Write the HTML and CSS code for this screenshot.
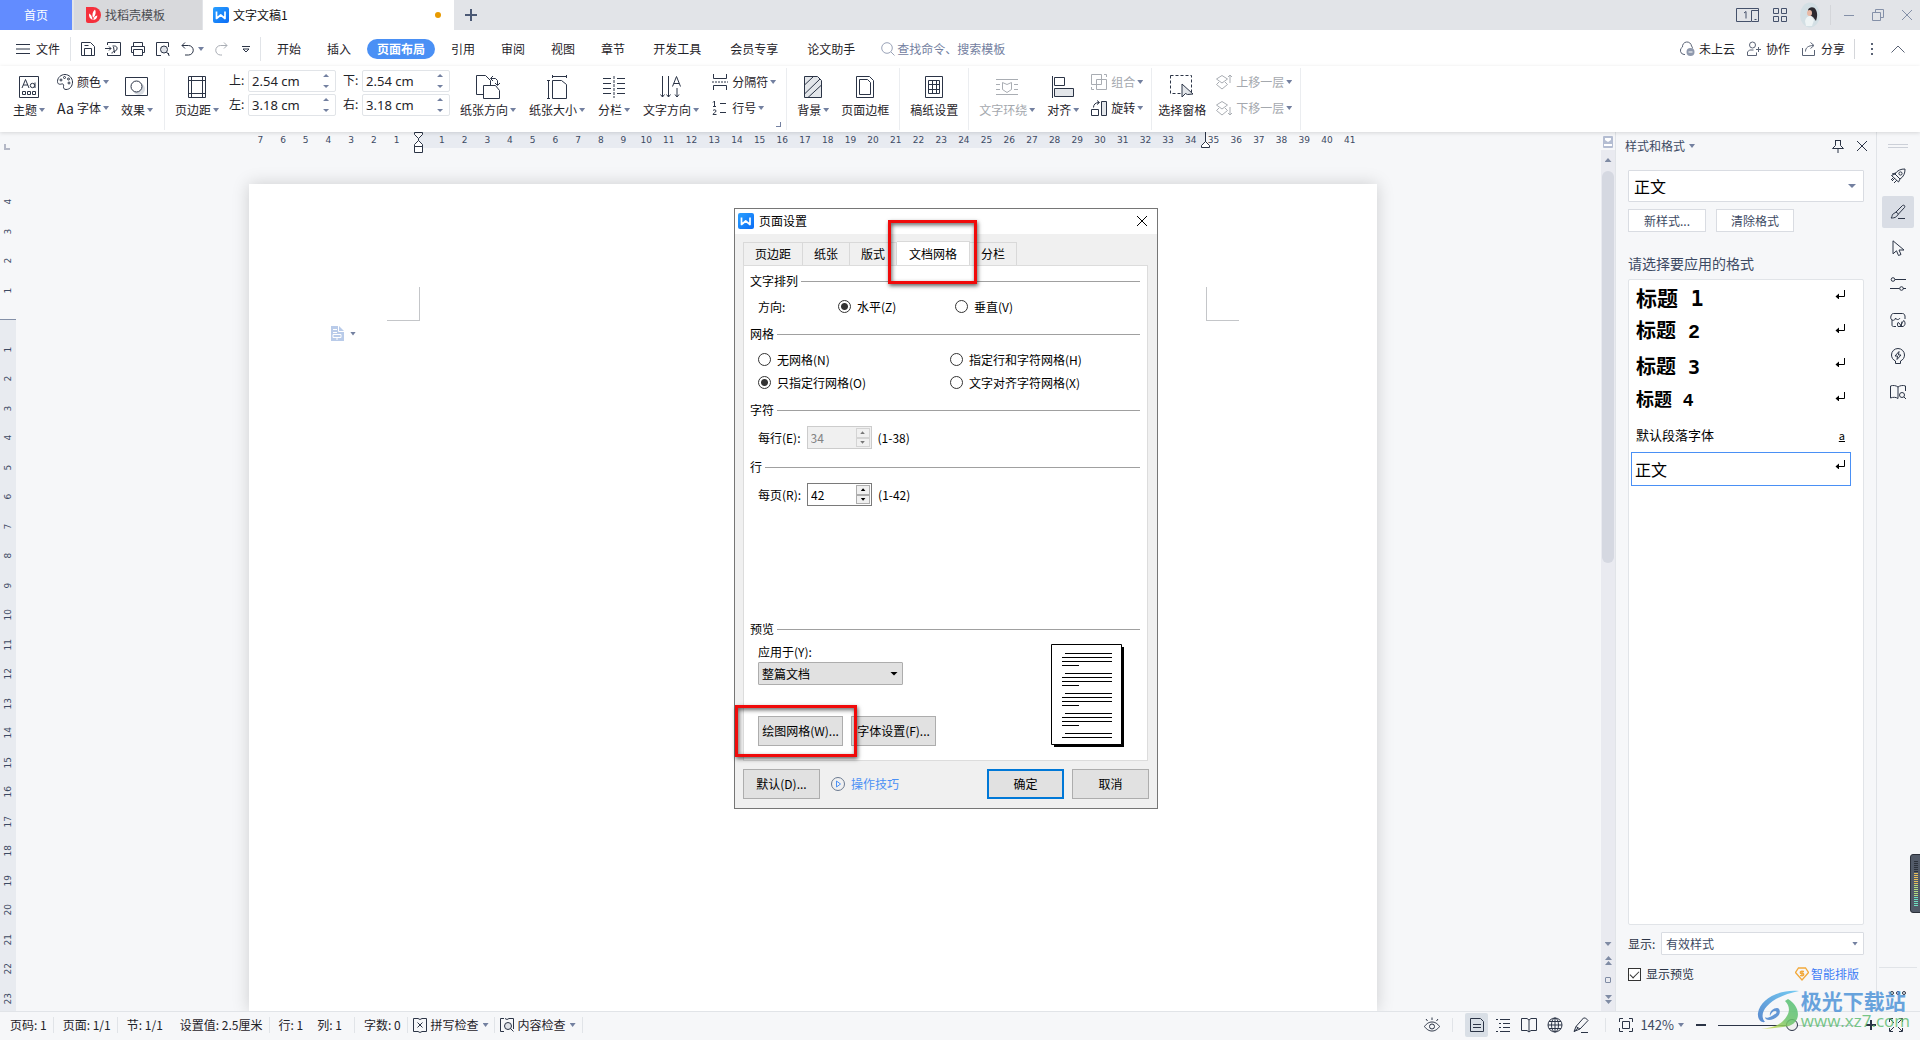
FILE: index.html
```html
<!DOCTYPE html>
<html lang="zh-CN">
<head>
<meta charset="utf-8">
<meta name="viewport" content="width=device-width, initial-scale=1">
<title>文字文稿1</title>
<link rel="stylesheet" href="styles.css">
</head>
<body>
<svg class="sprite" aria-hidden="true">
  <defs>
    <linearGradient id="wps-blue" x1="0" y1="0" x2="1" y2="1"><stop offset="0" stop-color="#2aa0ff"/><stop offset="1" stop-color="#0b6cf5"/></linearGradient>
    <linearGradient id="swirl-a" x1="0" y1="1" x2="1" y2="0"><stop offset="0" stop-color="#3f78c8"/><stop offset="1" stop-color="#5ec4f2"/></linearGradient>
    <linearGradient id="swirl-b" x1="0" y1="1" x2="1" y2="0"><stop offset="0" stop-color="#e8e04a"/><stop offset=".5" stop-color="#6cc46a"/><stop offset="1" stop-color="#4fbf7a"/></linearGradient>
  </defs>
  <symbol id="i-wps" viewBox="0 0 16 16"><rect width="16" height="16" rx="2" fill="url(#wps-blue)"/><path d="M3.500 4.500v7l4.200-3.500 4.300 3.500v-7" fill="none" stroke="#fff" stroke-width="1.700" stroke-linejoin="round"/></symbol>
  <symbol id="i-docer" viewBox="0 0 16 16"><path d="M1 0h7a8 8 0 0 1 0 16H3a2 2 0 0 1-2-2z" fill="#f5303c"/><path d="M7.600 13C4.600 11.500 3.500 9 4.200 6.500c1.800 1 3 3 3.400 6.500zM8 11C6.800 7.500 7.600 4.500 10 2.500c1.300 2.500.8 6-2 8.500zM8.300 13c.3-2.500 1.500-4 4-4.500.1 2.300-1.300 4-4 4.500z" fill="#fff"/></symbol>
  <symbol id="i-save" viewBox="0 0 16 16"><path d="M1.500 1.500h9l4 4v9h-13zM4.500 14.500v-7h7v7M4.500 4.500h4"/></symbol>
  <symbol id="i-export" viewBox="0 0 16 16"><path d="M2.500 4V1.500h13v13h-13V12M0 7.500h6M4 5.500l2 2-2 2M7 12.500c0-3 4-1 5-4.500.5-2-1-3-2.500-3H7.500M9.500 12c0-2-1-4-1-6"/></symbol>
  <symbol id="i-print" viewBox="0 0 16 16"><path d="M3.500 5.500v-4h9v4M3.500 11.500h-2v-6h13v6h-2M3.500 8.500h9v6h-9z"/></symbol>
  <symbol id="i-preview" viewBox="0 0 16 16"><path d="M6 14.500H1.500v-13h12V6M13.500 12v2.500"/><circle cx="9" cy="8.500" r="3.500" fill="#dfe2e8"/><path d="M11.500 11l3 3.500"/></symbol>
  <symbol id="i-undo" viewBox="0 0 16 16"><path d="M5 1.500l-3 3 3 3M2 4.500h6.500a4.500 4.500 0 0 1 0 9.500H5"/></symbol>
  <symbol id="i-redo" viewBox="0 0 16 16"><path d="M11 1.500l3 3-3 3M14 4.500H7.500a4.500 4.500 0 0 0 0 9.500H9"/></symbol>
  <symbol id="i-more" viewBox="0 0 8 8"><path d="M0 1.500h8M1 4l3 3 3-3z"/></symbol>
  <symbol id="i-menu" viewBox="0 0 14 12"><path d="M0 1.500h14M0 6h14M0 10.500h14"/></symbol>
  <symbol id="i-search" viewBox="0 0 14 14"><circle cx="6" cy="6" r="5.300"/><path d="M10 10l3.500 3.500"/></symbol>
  <symbol id="i-cloud" viewBox="0 0 16 16"><path d="M6 13.500H5A4 4 0 0 1 3.500 6a4.500 4.500 0 0 1 9-1c.8.8 1 1.500 1 2.500"/><circle cx="11.500" cy="11" r="4" fill="#8f99ad" stroke="none"/><path d="M9.500 11h4" stroke="#fff"/></symbol>
  <symbol id="i-team" viewBox="0 0 16 16"><circle cx="6.500" cy="4" r="3"/><path d="M1.500 14.500v-3.500l2-2h4M1.500 14.500h9v-3M12.500 6v5M10 8.500h5"/></symbol>
  <symbol id="i-share" viewBox="0 0 16 16"><path d="M1.500 7v7.500h12V9M4.500 10.500c0-4 3-6 8-6M9.500 1.500l3.500 3-3.500 3"/></symbol>
  <symbol id="i-theme" viewBox="0 0 20 22"><path d="M.5.500h19v21H.5zM3.500 15.500h3v3h-3zM8.500 15.500h3v3h-3zM13.500 15.500h3v3h-3zM3 12l3.500-8.500L10 12M4.200 9h4.600"/><circle cx="13.500" cy="9.500" r="2.200"/><path d="M16 6.500V12"/></symbol>
  <symbol id="i-palette" viewBox="0 0 16 16"><path d="M8 .5C4 .5.5 3.500.5 7.500c0 3 2.500 3 4 2.500s2.500.5 2 2.500c-.3 2 1 3 2.500 3 4 0 6.500-3.500 6.500-7.500S12 .5 8 .5z"/><circle cx="4" cy="6" r="1"/><circle cx="7.500" cy="3.500" r="1"/><circle cx="11.500" cy="5" r="1"/><circle cx="12" cy="9" r="1"/></symbol>
  <symbol id="i-effect" viewBox="0 0 24 20"><circle cx="14" cy="12" r="6" fill="#d9dde3" stroke="none"/><path d="M.5.500h22v18H.5z"/><circle cx="11.500" cy="9.500" r="5.500" fill="#fff"/></symbol>
  <symbol id="i-margin" viewBox="0 0 18 22"><path d="M.5.500h17v21H.5zM3.500.5v21M14.500.5v21M.5 4.500h17M.5 17.500h17"/></symbol>
  <symbol id="i-orient" viewBox="0 0 24 24"><path d="M7 19.500H.5V.5h9l5 5V10M7.500 23.500h16v-8l-4-5h-12zM15 3.500h4.500l2 2V10M17 1l-2.500 2.500L17 6M19 8l2.500 2.500L24 8"/></symbol>
  <symbol id="i-size" viewBox="0 0 20 24"><path d="M5.500 5.500h9l5 4v14h-14zM1.500 5.500v18M0 5.500h3M0 23.500h3M5.500 1.500h14M5.500 0v3M19.500 0v3"/></symbol>
  <symbol id="i-columns" viewBox="0 0 24 22"><path d="M1 2.500h8M1 7.500h8M1 12.500h8M1 17.500h8M15 2.500h8M15 7.500h8M15 12.500h8M15 17.500h8"/><path d="M12 0v22" stroke-dasharray="3 1"/></symbol>
  <symbol id="i-direction" viewBox="0 0 22 22"><path d="M2.500 0v21M8.500 0v21M.5 18.500l2 2.500 2-2.500M6.500 18.500l2 2.500 2-2.500M17 12v9M15 18.500l2 2.500 2-2.500M12.500 10.500l4-10 4 10M13.800 7.500h5.400"/></symbol>
  <symbol id="i-break" viewBox="0 0 16 16"><path d="M1.500 0v4.500h13V0M1.500 16v-4.500h13V16"/><path d="M0 8h16" stroke-dasharray="2 1"/></symbol>
  <symbol id="i-lineno" viewBox="0 0 16 16"><path d="M1 2.500l1.500-1.500v5M1 6.500h3M1 10.500c1-1 3-1 3 .5S1 13 1 14.500h3.500M8 3.500h6M8 12.500h6"/></symbol>
  <symbol id="i-bg" viewBox="0 0 18 22"><path d="M.5.500h13l4 4v17H.5z" fill="#e3e6ea"/><path d="M.5 9l9-8.500M.5 18L16 3M4 21.500L17.500 9"/></symbol>
  <symbol id="i-border" viewBox="0 0 18 22"><path d="M.5.500h13l4 4v17H.5zM3.500 3.500h8l3 3v12h-11z"/></symbol>
  <symbol id="i-grid" viewBox="0 0 18 22"><path d="M.5.500h17v21H.5zM3.500 4.500h11v13h-11zM3.500 8.500h11M3.500 13.500h11M7.500 4.500v4M11.500 4.500v4M7.500 8.500v5M11.500 8.500v5M7.500 13.500v4M11.500 13.500v4"/></symbol>
  <symbol id="i-wrap" viewBox="0 0 22 22"><path d="M0 3.500h22M0 8.500h4M0 13.500h4M18 8.500h4M18 13.500h4M0 18.500h22M6.500 6.500l4.500 2 4.500-2v7L11 16.500l-4.500-3z"/></symbol>
  <symbol id="i-align" viewBox="0 0 22 22"><path d="M.5 0v22M2.500 1.500h10v8h-10z"/><path d="M2.500 12.500h19v8h-19z" fill="#e3e6ea"/></symbol>
  <symbol id="i-group" viewBox="0 0 16 16"><path d="M.5.500h10v10H.5zM5.500 5.500h10v10h-10zM13 .5h2.500V3M.5 13v2.500H3"/></symbol>
  <symbol id="i-rotate" viewBox="0 0 16 16"><path d="M.5 9.500h7v6h-7z"/><path d="M10.500 1.500h5v14h-5z" fill="#e3e6ea"/><path d="M2.500 7.500c0-3 2-5 5.500-5M6 .5l2.500 2L6 4.500"/></symbol>
  <symbol id="i-select" viewBox="0 0 24 24"><path d="M.5.500h21v18H.5z" stroke-dasharray="3 2"/><path d="M12 9v13l3.500-3.500 2 1 5.500-.5z" fill="#e3e6ea"/></symbol>
  <symbol id="i-up" viewBox="0 0 16 16"><path d="M.5 5L6 1.500 11.500 5 6 9zM3 8L.5 10.500 6 15l5.500-4.500L9 8M14 9V1M12 3l2-2 2 2"/></symbol>
  <symbol id="i-down" viewBox="0 0 16 16"><path d="M.5 5L6 1.500 11.500 5 6 9zM3 8L.5 10.500 6 15l5.500-4.500L9 8M14 7v8M12 13l2 2 2-2"/></symbol>
  <symbol id="i-devices" viewBox="0 0 24 16"><path d="M15 14.500H.5v-13h22v13h-7v-11h7M8 6l2-1.500v7M18.500 12.500h2"/></symbol>
  <symbol id="i-apps" viewBox="0 0 14 14"><path d="M.5.500h5v5h-5zM8.500.5h5v5h-5zM.5 8.500h5v5h-5zM8.500 8.500h5v5h-5z"/></symbol>
  <symbol id="i-min" viewBox="0 0 12 12"><path d="M1 6.500h10"/></symbol>
  <symbol id="i-restore" viewBox="0 0 12 12"><path d="M.5 3.500h8v8h-8zM3.500 3.500v-3h8v8h-3"/></symbol>
  <symbol id="i-close" viewBox="0 0 12 12"><path d="M1 1l10 10M11 1L1 11"/></symbol>
  <symbol id="i-chevron" viewBox="0 0 14 8"><path d="M.5 7.500L7 1l6.500 6.500"/></symbol>
  <symbol id="i-dots" viewBox="0 0 2 12"><path d="M1 0v2M1 5v2M1 10v2" stroke-width="2"/></symbol>
  <symbol id="i-pin" viewBox="0 0 14 14"><path d="M4 1.500h6M4.500 1.500v5L1.500 9.500h11l-3-3v-5M7 9.500V14"/></symbol>
  <symbol id="i-return" viewBox="0 0 10 9"><path d="M9.500 0v6.500H2"/><path d="M4 3.500v6L.5 6.500z" fill="#000" stroke="none"/></symbol>
  <symbol id="i-rocket" viewBox="0 0 16 16"><path d="M5 6C7 2.500 11 .8 15 1c.2 4-1.500 8-5 10zM5 6L1.500 7.500 8.500 14 10 11M6 5L2 6M5 10l-3 3M3 10l-2 2M7 12l-3 3"/><circle cx="10.500" cy="5.500" r="1.600"/></symbol>
  <symbol id="i-brush" viewBox="0 0 16 16"><path d="M6 8l6.500-6.500c1.500-1 3 .5 2 2L8.500 10M6 8l2.500 2-2 2.500c-1.500 1.500-4 1.500-5.500 1.500 1-1 1-2 1.500-3.500zM8 14.500h7"/></symbol>
  <symbol id="i-pen" viewBox="0 0 16 16"><path d="M1 14.500L3 9.500 10.500 1h2L15 3.500 7 12zM3 9.500L7 12M1 14.500l4-3.500M8 15.500h7"/></symbol>
  <symbol id="i-cursor" viewBox="0 0 16 16"><path d="M3 .8v13l3.500-3 2 4.700 2.500-1-2-4.500H14z"/></symbol>
  <symbol id="i-sliders" viewBox="0 0 16 16"><circle cx="3" cy="3.500" r="1.800"/><path d="M5 3.500h11M0 12.500h9.500M13 12.500h3"/><circle cx="11.500" cy="12.500" r="1.800"/></symbol>
  <symbol id="i-leaf" viewBox="0 0 16 16"><path d="M6 14.500H3.500c-1 0-1.500-.5-1.500-1.500V8C.5 7 .5 5.500 1 4c.5-1.500 1-2.500 2.500-2.500h9c1.500 0 2 1 2.500 2.500v3M2 8c2 1 3.500-.5 3.500-2 1 2 3.500 2 4.500 0M8 14.500c-1-2-.5-3.500 0-4 1.500.5 2.500 2 3 4 .5-3 1.500-5 3-6 1.500 2 1.500 5-1 6zM11 14.500l1-5"/></symbol>
  <symbol id="i-bulb" viewBox="0 0 16 16"><path d="M5.500 13C3 12 1.500 9.500 1.500 7a6.500 6.500 0 0 1 13 0c0 2.500-1.500 5-4 6v2.500h-5zM9 3.500L5 8h2.500L7 11.500 11 7H8.500z"/></symbol>
  <symbol id="i-reader" viewBox="0 0 16 16"><path d="M8 14.500C6 13 3 13 .5 14V2C3 1 6 1.500 8 3c2-1.500 5-2 7.500-1v5M8 3v11.500"/><circle cx="12" cy="11" r="2.500"/><path d="M14 13l2 2"/></symbol>
  <symbol id="i-eye" viewBox="0 0 16 16"><path d="M.5 9.500C3 6 5.500 5 8 5s5 1 7.500 4.500C13 13 10.500 14 8 14S3 13 .5 9.500zM8 3V.5M3.500 4L2 2M12.500 4L14 2"/><circle cx="8" cy="9.500" r="2.500"/></symbol>
  <symbol id="i-page" viewBox="0 0 16 16"><path d="M1.500 1.500h10l3 3v10h-13zM4 7.500h8M4 10.500h8"/></symbol>
  <symbol id="i-outline" viewBox="0 0 16 16"><path d="M1 2.500h2M5 2.500h10M4 6.500h2M8 6.500h7M4 10.500h2M8 10.500h7M1 14.500h2M5 14.500h10"/></symbol>
  <symbol id="i-book" viewBox="0 0 16 16"><path d="M.5 1.500H6l2 1.500 2-1.500h5.500v12H10L8 15l-2-1.500H.5zM8 3v12"/></symbol>
  <symbol id="i-globe" viewBox="0 0 16 16"><circle cx="8" cy="8" r="7"/><ellipse cx="8" cy="8" rx="3.500" ry="7"/><path d="M1 8h14M2 4.500h12M2 11.500h12M8 1v14"/></symbol>
  <symbol id="i-fit" viewBox="0 0 16 16"><path d="M4.500 4.500h7v7h-7zM1.500 5V1.500H5M11 1.500h3.500V5M14.500 11v3.500H11M5 14.500H1.500V11"/></symbol>
  <symbol id="i-full" viewBox="0 0 16 16"><path d="M1.500 5V1.500H5M11 1.500h3.500V5M14.500 11v3.500H11M5 14.500H1.500V11M2 2l4 4M14 2l-4 4M14 14l-4-4M2 14l4-4"/></symbol>
  <symbol id="i-spell" viewBox="0 0 16 16"><path d="M6 1.500H1.500v13H6l2 1 2-1h4.500v-13H10l-2 1zM5.500 5.500l5 5M10.500 5.500l-5 5"/></symbol>
  <symbol id="i-check" viewBox="0 0 16 16"><path d="M5 1.500H1.500v13H5M8 2.500l2-1h4.500V12M8 2.500l-2-1"/><circle cx="9" cy="9" r="3.500" fill="#dfe2e8"/><path d="M11.500 11.500l3 3"/></symbol>
  <symbol id="i-smart" viewBox="0 0 14 14"><path d="M3.500 1h7L13.500 5.500 7 13 .5 5.500z" stroke="#f2a93b" stroke-width="1.300"/><path d="M9 4.500H6c-1 0-1 2 0 2h2c1 0 1 2.200 0 2.200H5M7 3.500v6" stroke="#f2a93b" stroke-width="1.300"/></symbol>
  <symbol id="i-play" viewBox="0 0 14 14"><circle cx="7" cy="7" r="6.500" stroke="#6b7a90"/><path d="M5.500 4l4 3-4 3z" stroke="#4a90f5"/></symbol>
</svg>

<div class="app">
  <header class="titlebar">
    <button class="home-tab">首页</button>
    <button class="file-tab"><svg class="ic16 plain"><use href="#i-docer"/></svg>找稻壳模板</button>
    <button class="file-tab current"><svg class="ic16 plain"><use href="#i-wps"/></svg>文字文稿1<span class="unsaved"></span></button>
    <button class="new-tab" aria-label="新建"></button>
    <div class="window-tools">
      <svg class="ic-devices"><use href="#i-devices"/></svg>
      <svg class="ic14"><use href="#i-apps"/></svg>
      <svg class="avatar plain" viewBox="0 0 20 26"><ellipse cx="10" cy="13" rx="10" ry="12.500" fill="#d3dfe4"/><path d="M8 8c1-3 6-4 8 0s1 8 0 11l-3-4-5-3z" fill="#2c2a30"/><ellipse cx="9.500" cy="11" rx="2.500" ry="3" fill="#e8b9a5"/><path d="M5 19c1-4 3-5 6-5l3 4-2 6H6z" fill="#eef4f5"/></svg>
      <span class="vline"></span>
      <button aria-label="最小化"><svg class="ic12"><use href="#i-min"/></svg></button>
      <button aria-label="还原"><svg class="ic12"><use href="#i-restore"/></svg></button>
      <button aria-label="关闭"><svg class="ic12"><use href="#i-close"/></svg></button>
    </div>
  </header>

  <nav class="menubar">
    <button class="file-menu"><svg class="ic-menu"><use href="#i-menu"/></svg>文件</button>
    <div class="quick">
      <svg class="ic16"><use href="#i-save"/></svg>
      <svg class="ic16"><use href="#i-export"/></svg>
      <svg class="ic16"><use href="#i-print"/></svg>
      <svg class="ic16"><use href="#i-preview"/></svg>
      <span class="with-caret"><svg class="ic16"><use href="#i-undo"/></svg><i class="caret"></i></span>
      <svg class="ic16 faded"><use href="#i-redo"/></svg>
      <svg class="ic8"><use href="#i-more"/></svg>
    </div>
    <div class="tabs">
      <button>开始</button><button>插入</button><button class="current">页面布局</button><button>引用</button><button>审阅</button><button>视图</button><button>章节</button>
    </div>
    <div class="tabs more">
      <button>开发工具</button><button>会员专享</button><button>论文助手</button>
    </div>
    <label class="search"><svg class="ic14"><use href="#i-search"/></svg><input type="text" placeholder="查找命令、搜索模板" aria-label="查找命令、搜索模板"></label>
    <div class="account">
      <button><svg class="ic16"><use href="#i-cloud"/></svg>未上云</button>
      <button><svg class="ic16"><use href="#i-team"/></svg>协作</button>
      <button><svg class="ic16"><use href="#i-share"/></svg>分享</button>
      <span class="vline"></span>
      <svg class="ic-dots"><use href="#i-dots"/></svg>
      <svg class="ic-chevron"><use href="#i-chevron"/></svg>
    </div>
  </nav>

  <section class="ribbon">
    <div class="group snug">
      <button class="big"><svg width="20" height="22"><use href="#i-theme"/></svg><span>主题<i class="caret"></i></span></button>
      <div class="stack">
        <button class="small"><svg class="ic16"><use href="#i-palette"/></svg>颜色<i class="caret"></i></button>
        <button class="small"><b class="aa">Aa</b>字体<i class="caret"></i></button>
      </div>
      <button class="big"><svg width="24" height="20"><use href="#i-effect"/></svg><span>效果<i class="caret"></i></span></button>
    </div>
    <div class="group wide">
      <button class="big"><svg width="18" height="22"><use href="#i-margin"/></svg><span>页边距<i class="caret"></i></span></button>
      <div class="margins">
        <label for="m-top">上:</label><span class="spin"><input id="m-top" type="text" value="2.54 cm"><span class="arrows"></span></span>
        <label for="m-bottom">下:</label><span class="spin"><input id="m-bottom" type="text" value="2.54 cm"><span class="arrows"></span></span>
        <label for="m-left">左:</label><span class="spin"><input id="m-left" type="text" value="3.18 cm"><span class="arrows"></span></span>
        <label for="m-right">右:</label><span class="spin"><input id="m-right" type="text" value="3.18 cm"><span class="arrows"></span></span>
      </div>
      <button class="big"><svg width="24" height="24"><use href="#i-orient"/></svg><span>纸张方向<i class="caret"></i></span></button>
      <button class="big"><svg width="20" height="24"><use href="#i-size"/></svg><span>纸张大小<i class="caret"></i></span></button>
      <button class="big"><svg width="24" height="22"><use href="#i-columns"/></svg><span>分栏<i class="caret"></i></span></button>
      <button class="big"><svg width="22" height="22"><use href="#i-direction"/></svg><span>文字方向<i class="caret"></i></span></button>
      <div class="stack">
        <button class="small"><svg class="ic16"><use href="#i-break"/></svg>分隔符<i class="caret"></i></button>
        <button class="small"><svg class="ic16"><use href="#i-lineno"/></svg>行号<i class="caret"></i></button>
      </div>
      <i class="launcher"></i>
    </div>
    <div class="group">
      <button class="big"><svg width="18" height="22"><use href="#i-bg"/></svg><span>背景<i class="caret"></i></span></button>
      <button class="big"><svg width="18" height="22"><use href="#i-border"/></svg><span>页面边框</span></button>
    </div>
    <div class="group">
      <button class="big"><svg width="18" height="22"><use href="#i-grid"/></svg><span>稿纸设置</span></button>
    </div>
    <div class="group tight-end">
      <button class="big off"><svg width="22" height="22"><use href="#i-wrap"/></svg><span>文字环绕<i class="caret"></i></span></button>
      <button class="big"><svg width="22" height="22"><use href="#i-align"/></svg><span>对齐<i class="caret"></i></span></button>
      <div class="stack">
        <button class="small off"><svg class="ic16"><use href="#i-group"/></svg>组合<i class="caret"></i></button>
        <button class="small"><svg class="ic16"><use href="#i-rotate"/></svg>旋转<i class="caret"></i></button>
      </div>
    </div>
    <div class="group tight-start">
      <button class="big"><svg width="24" height="24"><use href="#i-select"/></svg><span>选择窗格</span></button>
      <div class="stack">
        <button class="small off"><svg class="ic16"><use href="#i-up"/></svg>上移一层<i class="caret"></i></button>
        <button class="small off"><svg class="ic16"><use href="#i-down"/></svg>下移一层<i class="caret"></i></button>
      </div>
    </div>
  </section>

  <main class="workspace">
    <div class="ruler-v">
      <i class="tabstop"></i>
      <div class="ticks"><span>4</span><span>3</span><span>2</span><span>1</span><span class="zero"></span><span>1</span><span>2</span><span>3</span><span>4</span><span>5</span><span>6</span><span>7</span><span>8</span><span>9</span><span>10</span><span>11</span><span>12</span><span>13</span><span>14</span><span>15</span><span>16</span><span>17</span><span>18</span><span>19</span><span>20</span><span>21</span><span>22</span><span>23</span></div>
    </div>
    <div class="canvas">
      <div class="ruler-h"><span>7</span><span>6</span><span>5</span><span>4</span><span>3</span><span>2</span><span>1</span><span class="marker"><svg width="10" height="22" viewBox="0 0 10 22"><path d="M.5.500h8v2l-4 4-4-4zM4.500 6.500v2l4 4v2h-8v-2l4-4M.5 14.500h8v6h-8z"/></svg></span><span>1</span><span>2</span><span>3</span><span>4</span><span>5</span><span>6</span><span>7</span><span>8</span><span>9</span><span>10</span><span>11</span><span>12</span><span>13</span><span>14</span><span>15</span><span>16</span><span>17</span><span>18</span><span>19</span><span>20</span><span>21</span><span>22</span><span>23</span><span>24</span><span>25</span><span>26</span><span>27</span><span>28</span><span>29</span><span>30</span><span>31</span><span>32</span><span>33</span><span>34</span><span class="indent"><svg width="10" height="16" viewBox="0 0 10 16"><path d="M4.500 0v10M.5 15.500v-2l4-4 4 4v2z"/></svg>35</span><span>36</span><span>37</span><span>38</span><span>39</span><span>40</span><span>41</span></div>
      <article class="page">
        <div class="corners"><i class="corner left"></i><i class="corner right"></i></div>
        <div class="para-tool"><svg class="plain" width="13" height="15" viewBox="0 0 13 15"><path d="M0 0h8l5 5v10H0z" fill="#b9cbe9"/><path d="M7.500 0v5.500H13M2 3.500h4M2 6.500h4M2 8.500h8v3H2zM6 11v3" fill="none" stroke="#fff"/></svg><i class="caret"></i></div>
      </article>
    </div>
    <div class="scroll">
      <svg class="plain" width="10" height="12" viewBox="0 0 10 12"><rect width="10" height="12" rx="1" fill="#b4bdd2"/><path d="M2 2h6v2L5 6 2 4zM1 8h8v2H1z" fill="#fff"/></svg>
      <div class="track"><i class="up"></i><i class="thumb"></i><i class="down"></i>
        <svg class="plain" width="7" height="9" viewBox="0 0 7 9"><path d="M3.500 0L7 4H0zM3.500 5L7 9H0z" fill="#7f8ba4"/></svg>
        <i class="square"></i>
        <svg class="plain" width="7" height="9" viewBox="0 0 7 9"><path d="M0 0h7L3.500 4zM0 5h7L3.500 9z" fill="#7f8ba4"/></svg>
      </div>
    </div>

    <aside class="styles">
      <header><h2>样式和格式<i class="caret"></i></h2><svg class="ic14"><use href="#i-pin"/></svg><svg class="ic12"><use href="#i-close"/></svg></header>
      <span class="pick current-style"><select aria-label="当前样式"><option>正文</option></select></span>
      <div class="style-actions"><button>新样式...</button><button>清除格式</button></div>
      <h3>请选择要应用的格式</h3>
      <ul class="style-list">
        <li class="h1">标题 1<svg class="mark"><use href="#i-return"/></svg></li>
        <li class="h2">标题 2<svg class="mark"><use href="#i-return"/></svg></li>
        <li class="h3">标题 3<svg class="mark"><use href="#i-return"/></svg></li>
        <li class="h4">标题 4<svg class="mark"><use href="#i-return"/></svg></li>
        <li class="char">默认段落字体<u>a</u></li>
        <li class="body selected">正文<svg class="mark"><use href="#i-return"/></svg></li>
      </ul>
      <div class="show"><label for="show">显示:</label><span class="pick"><select id="show"><option>有效样式</option></select></span></div>
      <div class="foot"><label><input type="checkbox" checked>显示预览</label><a href="#"><svg class="ic14"><use href="#i-smart"/></svg>智能排版</a></div>
    </aside>

    <div class="rail">
      <i class="grip"></i>
      <button aria-label="快捷"><svg class="ic16"><use href="#i-rocket"/></svg></button>
      <button class="current" aria-label="样式"><svg class="ic16"><use href="#i-brush"/></svg></button>
      <button aria-label="选择"><svg class="ic16"><use href="#i-cursor"/></svg></button>
      <button aria-label="属性"><svg class="ic16"><use href="#i-sliders"/></svg></button>
      <button aria-label="素材"><svg class="ic16"><use href="#i-leaf"/></svg></button>
      <button aria-label="推荐"><svg class="ic16"><use href="#i-bulb"/></svg></button>
      <button aria-label="查阅"><svg class="ic16"><use href="#i-reader"/></svg></button>
      <div class="rail-more"><svg width="16" height="6" viewBox="0 0 16 6"><circle cx="2" cy="3" r="1.500"/><circle cx="8" cy="3" r="1.500"/><circle cx="14" cy="3" r="1.500"/></svg></div>
    </div>
  </main>

  <footer class="status">
    <span>页码: 1</span><span class="line">页面: 1/1</span><span class="line">节: 1/1</span><span class="far">设置值: 2.5厘米</span><span class="line">行: 1</span><span class="column">列: 1</span><span class="line">字数: 0</span>
    <button class="line"><svg class="ic16"><use href="#i-spell"/></svg>拼写检查<i class="caret"></i></button>
    <button class="line last"><svg class="ic16"><use href="#i-check"/></svg>内容检查<i class="caret"></i></button>
    <div class="views">
      <svg class="ic16"><use href="#i-eye"/></svg>
      <i class="vline"></i>
      <div class="modes">
        <button class="current" aria-label="页面视图"><svg class="ic16"><use href="#i-page"/></svg></button>
        <button aria-label="大纲"><svg class="ic16"><use href="#i-outline"/></svg></button>
        <button aria-label="阅读版式"><svg class="ic16"><use href="#i-book"/></svg></button>
        <button aria-label="Web版式"><svg class="ic16"><use href="#i-globe"/></svg></button>
        <button aria-label="写作模式"><svg class="ic16"><use href="#i-pen"/></svg></button>
      </div>
      <i class="vline"></i>
      <svg class="ic16"><use href="#i-fit"/></svg>
      <span class="zoom">142%<i class="caret"></i></span>
      <button class="minus" aria-label="缩小"></button>
      <input type="range" min="0" max="100" value="54" aria-label="显示比例">
      <button class="plus" aria-label="放大"></button>
      <svg class="ic16"><use href="#i-full"/></svg>
    </div>
  </footer>

  <div class="dialog" role="dialog" aria-label="页面设置">
    <header><svg class="ic16 plain"><use href="#i-wps"/></svg><span>页面设置</span><button aria-label="关闭"><svg class="ic12"><use href="#i-close"/></svg></button></header>
    <div class="dialog-tabs"><button>页边距</button><button>纸张</button><button>版式</button><button class="current">文档网格</button><button>分栏</button></div>
    <div class="panel">
      <fieldset><legend>文字排列</legend>
        <div class="row direction"><span>方向:</span><label><input type="radio" name="dir" checked>水平(Z)</label><label><input type="radio" name="dir">垂直(V)</label></div>
      </fieldset>
      <fieldset><legend>网格</legend>
        <div class="row pair"><label><input type="radio" name="grid">无网格(N)</label><label><input type="radio" name="grid">指定行和字符网格(H)</label></div>
        <div class="row pair"><label><input type="radio" name="grid" checked>只指定行网格(O)</label><label><input type="radio" name="grid">文字对齐字符网格(X)</label></div>
      </fieldset>
      <fieldset class="number"><legend>字符</legend>
        <div class="row"><label for="per-line">每行(E):</label><span class="stepper off"><input id="per-line" type="text" value="34" disabled><span class="steps"><i></i><i></i></span></span><span>(1-38)</span></div>
      </fieldset>
      <fieldset class="number"><legend>行</legend>
        <div class="row"><label for="per-page">每页(R):</label><span class="stepper"><input id="per-page" type="text" value="42"><span class="steps"><i></i><i></i></span></span><span>(1-42)</span></div>
      </fieldset>
      <fieldset class="preview"><legend>预览</legend>
        <div class="preview-body">
          <div class="apply"><label for="apply">应用于(Y):</label><span class="pick"><select id="apply"><option>整篇文档</option></select></span>
            <div class="apply-buttons"><button>绘图网格(W)...</button><button>字体设置(F)...</button></div></div>
          <svg class="sheet plain" width="73" height="103" viewBox="0 0 73 103"><path d="M3 3h70v100H3z" fill="#000"/><path d="M.5.500h70v100H.5z" fill="#fff" stroke="#000"/><path d="M14 9.500h47M11 13.500h50M11 17.500h50M11 21.500h17M14 29.500h47M11 33.500h50M11 37.500h50M11 41.500h17M14 49.500h47M11 53.500h50M11 57.500h50M11 61.500h17M14 69.500h47M11 73.500h50M11 77.500h50M11 81.500h17M14 89.500h47M11 93.500h50" stroke="#000"/></svg>
        </div>
      </fieldset>
    </div>
    <div class="dialog-foot"><button>默认(D)...</button><a href="#"><svg class="ic14"><use href="#i-play"/></svg>操作技巧</a><button class="primary">确定</button><button>取消</button></div>
    <i class="callout tab-callout"></i>
    <i class="callout button-callout"></i>
  </div>

  <svg class="meter plain" viewBox="0 0 10 59"><path d="M14 .5H3a2.500 2.500 0 0 0-2.500 2.500v53A2.500 2.500 0 0 0 3 58.500h11z" fill="#525a68" stroke="#2b303a"/><path d="M6 7v12" stroke="#2b303a" stroke-width="4" stroke-dasharray="1 1"/><path d="M6 19v12" stroke="#e8c05a" stroke-width="4" stroke-dasharray="1 1"/><path d="M6 31v12" stroke="#b4dc80" stroke-width="4" stroke-dasharray="1 1"/><path d="M6 43v10" stroke="#6fe0c0" stroke-width="4" stroke-dasharray="1 1"/></svg>

  <div class="watermark">
    <svg class="plain" width="44" height="41" viewBox="0 0 44 41"><path d="M42 2C22 0 3 10 1 24c-.8 6 3 10 7 9C0 24 12 8 42 2z" fill="url(#swirl-a)"/><path d="M8 28c0 4 8 4 13-1 3-3 2-8-1-8-4 0-8 4-7 8 1-3 3-5 5-5s2 2 0 3c-4 3-9 5-10 3z" fill="#4a86cf"/><path d="M31 10c14 8 14 27-5 28C17 39 9 40 4 40c8-1 17-3 22-8 7-7 8-14 2-20z" fill="url(#swirl-b)"/></svg>
    <div><strong>极光下载站</strong><span>www.xz7.com</span></div>
  </div>
</div>
</body>
</html>
```
FILE: styles.css
```css
* { box-sizing: border-box; }

:root {
  --ink: #2b3446;
  --muted: #7380a0;
  --line: #e1e4e8;
  --surface: #f6f7f9;
  --blue: #4a90f5;
}

body {
  margin: 0;
  font: 12px/16px "Noto Sans CJK SC", sans-serif;
  color: #1f2329;
}

button, input, select { font: inherit; color: inherit; margin: 0; }
button { border: 0; padding: 0; background: none; white-space: nowrap; }
a { text-decoration: none; color: var(--blue); }
h2, h3, ul, fieldset { margin: 0; padding: 0; font-weight: normal; }

svg { flex: none; display: block; fill: none; stroke: var(--ink); overflow: visible; }
svg.plain { stroke: none; }
.sprite { width: 0; height: 0; position: absolute; overflow: hidden; }
.ic8 { width: 8px; height: 8px; }
.ic12 { width: 12px; height: 12px; }
.ic14 { width: 14px; height: 14px; }
.ic16 { width: 16px; height: 16px; }

.caret {
  flex: none;
  width: 6px;
  height: 4px;
  margin-left: 2px;
  background: var(--muted);
  clip-path: polygon(0 0, 100% 0, 50% 100%);
}
.vline { flex: none; width: 1px; background: #d4d6da; }

.app { height: 100vh; display: flex; flex-direction: column; overflow: hidden; position: relative; background: #fff; }

/* title bar */
.titlebar { flex: none; height: 30px; display: flex; background: #e2e4e8; }
.home-tab { width: 72px; background: #628cff; color: #fff; }
.file-tab { width: 128px; margin-left: 2px; padding-left: 11px; display: flex; align-items: center; gap: 4px; background: #d8d9dc; color: #4b4d52; }
.file-tab.current { width: 251px; margin-left: 1px; padding: 0 13px 0 10px; background: #fff; color: #111; }
.unsaved { width: 6px; height: 6px; margin-left: auto; border-radius: 50%; background: #e89a00; }
.new-tab { width: 34px; background: linear-gradient(#4b5975, #4b5975) center / 12px 2px no-repeat, linear-gradient(#4b5975, #4b5975) center / 2px 12px no-repeat; }
.window-tools { margin-left: auto; padding-right: 5px; display: flex; align-items: center; gap: 13px; }
.window-tools svg { stroke: #45516b; }
.window-tools button svg { stroke: #8490a8; }
.window-tools button { padding: 0 2px; }
.window-tools .avatar { width: 20px; height: 26px; stroke: none; }
.window-tools .vline { height: 20px; margin: 0 -3px; }
.ic-devices { width: 24px; height: 16px; }

/* menu bar */
.menubar { flex: none; height: 36px; padding: 2px 15px 0 16px; display: flex; align-items: center; }
.file-menu { display: flex; align-items: center; gap: 6px; }
.ic-menu { width: 14px; height: 12px; }
.quick { margin-left: 10px; padding: 4px 10px 4px 9px; border: solid var(--line); border-width: 0 1px; display: flex; align-items: center; gap: 9px; }
.quick .with-caret { display: flex; align-items: center; }
.quick .ic8 { margin: 0 0 0 4px; }
.faded { opacity: .4; }
.tabs { margin-left: 6px; display: flex; gap: 6px; }
.tabs button { height: 20px; padding: 0 10px; border-radius: 10px; }
.tabs .current { background: var(--blue); color: #fff; font-weight: bold; }
.tabs.more { margin-left: 8px; gap: 9px; }
.search { margin-left: 16px; display: flex; align-items: center; gap: 2px; }
.search svg { stroke: #9aa3b8; }
.search input { width: 140px; border: 0; padding: 0; background: none; }
.search input::placeholder { color: var(--muted); opacity: 1; }
.account { margin-left: auto; display: flex; align-items: center; gap: 11px; }
.account button { display: flex; align-items: center; gap: 4px; }
.account svg { stroke: #5a6375; }
.account .vline { height: 20px; margin-left: -2px; }
.ic-dots { width: 2px; height: 12px; margin: 0 7px 0 5px; }
.ic-chevron { width: 14px; height: 8px; }

/* ribbon */
.ribbon { flex: none; height: 66px; padding-left: 2px; display: flex; background: #fff; box-shadow: 0 1px 4px #0002; z-index: 1; position: relative; }
.group { margin: 2px 0; padding: 0 10px; display: flex; gap: 12px; border-right: 1px solid #ebedf0; position: relative; }
.group.snug { padding: 0 11px; }
.group.wide { gap: 13px; }
.group.tight-end { padding-right: 8px; }
.group.tight-start { padding-left: 6px; padding-right: 8px; gap: 10px; }
.big { display: flex; flex-direction: column; align-items: center; justify-content: space-between; padding: 4px 0 12px; }
.big span, .small { display: flex; align-items: center; height: 16px; }
.big svg { margin: auto 0; }
.stack { display: flex; flex-direction: column; gap: 10px; padding-top: 6px; }
.small svg, .aa { width: 16px; margin-right: 4px; }
.aa { font-weight: normal; font-size: 14px; }
.off { color: #a4a8ae; }
.off svg { stroke: #a9adb3; }
.launcher { position: absolute; right: 5px; bottom: 3px; width: 5px; height: 5px; border: solid #7380a0; border-width: 0 1px 1px 0; }
.margins { margin: 0 -3px; padding-top: 2px; display: grid; grid-template-columns: 19px 95px 19px 88px; grid-template-rows: 22px 22px; row-gap: 2px; }
.margins label { line-height: 20px; }
.spin { width: 88px; border: 1px solid var(--line); border-radius: 2px; display: flex; align-items: center; background: #fff; }
.spin input { width: 70px; height: 20px; border: 0; padding: 0 0 0 3px; background: none; font: 13px/20px "Noto Sans", sans-serif; }
.arrows { width: 6px; height: 14px; margin-left: 4px; display: flex; flex-direction: column; justify-content: space-between; }
.arrows::before, .arrows::after { content: ""; height: 3px; background: var(--muted); clip-path: polygon(50% 0, 100% 100%, 0 100%); }
.arrows::after { clip-path: polygon(0 0, 100% 0, 50% 100%); }

/* workspace */
.workspace { flex: 1; min-height: 0; display: flex; background: var(--surface); }
.ruler-v { flex: none; width: 16px; display: flex; flex-direction: column; overflow: hidden; color: #3d4a63; }
.tabstop { flex: none; width: 6px; height: 6px; margin: 12px 0 37px 4px; border: solid #b4b8c6; border-width: 0 0 2px 2px; }
.ticks { flex: none; height: 826px; display: grid; grid-auto-rows: 1fr; background: linear-gradient(transparent 132px, #8490a8 132px, #8490a8 133px, #e8ebf0 133px); }
.ticks span { writing-mode: vertical-rl; transform: rotate(180deg); text-align: center; font: 9px/16px "DejaVu Sans", sans-serif; }
.canvas { flex: 1; min-width: 0; padding-left: 9px; display: flex; flex-direction: column; align-items: center; overflow: hidden; }
.ruler-h { flex: none; width: 1128px; height: 16px; padding-right: 16px; display: grid; grid-auto-flow: column; grid-auto-columns: minmax(0, 1fr); background: linear-gradient(90deg, transparent 170px, #e8ebf1 170px, #e8ebf1 956px, transparent 956px); color: #3d4a63; font: 9px/16px "DejaVu Sans", sans-serif; text-align: center; }
.ruler-h svg { fill: #fff; }
.marker svg { margin: 0 auto; }
.indent { position: relative; }
.indent svg { position: absolute; left: -1px; top: 0; }
.page { flex: 1; width: 1128px; margin-top: 36px; padding: 103px 138px 0; background: #fff; box-shadow: 0 0 16px #0000002b; }
.corners { display: flex; justify-content: space-between; }
.corner { width: 33px; height: 34px; border: 0 solid #c4c6c9; border-bottom-width: 1px; }
.corner.left { border-right-width: 1px; }
.corner.right { border-left-width: 1px; }
.para-tool { margin: 5px 0 0 -56px; display: flex; align-items: center; gap: 4px; }

.scroll { flex: none; width: 15px; display: flex; flex-direction: column; align-items: center; padding-top: 4px; border-right: 1px solid var(--line); }
.track { flex: 1; min-height: 0; width: 100%; margin-top: 2px; padding: 8px 1px 7px; display: flex; flex-direction: column; align-items: center; background: #e9eaf0; }
.track svg, .track i { flex: none; }
.up, .down { width: 7px; height: 4px; background: #7f8ba4; }
.up { clip-path: polygon(50% 0, 100% 100%, 0 100%); }
.down { clip-path: polygon(0 0, 100% 0, 50% 100%); margin: auto 0 10px; }
.thumb { width: 12px; height: 392px; margin-top: 9px; border-radius: 6px; background: #d5d8e1; }
.square { width: 6px; height: 6px; margin: 12px 0; border: 1px solid #7f8ba4; border-radius: 1px; }

/* styles panel */
.styles { flex: none; width: 261px; padding: 6px 12px 29px; display: flex; flex-direction: column; border-right: 1px solid var(--line); color: #3d4a63; }
.styles header { height: 16px; display: flex; align-items: center; gap: 11px; margin: 0 -4px 0 -3px; }
.styles h2 { flex: 1; display: flex; align-items: center; font-size: 12px; }
.styles h2 .caret { margin-left: 4px; }
.pick { display: grid; align-items: center; }
.pick select { grid-area: 1 / 1; width: 100%; height: 23px; padding: 0 4px; appearance: none; border: 1px solid #d9dce2; border-radius: 1px; background: #fff; }
.pick::after { content: ""; grid-area: 1 / 1; justify-self: end; width: 6px; height: 4px; margin-right: 6px; background: var(--muted); clip-path: polygon(0 0, 100% 0, 50% 100%); pointer-events: none; }
.current-style { margin-top: 16px; }
.current-style select { height: 32px; padding: 0 5px; font-size: 16px; color: #000; }
.current-style::after { width: 8px; margin-right: 8px; }
.style-actions { margin-top: 7px; display: flex; gap: 10px; }
.style-actions button { width: 78px; height: 23px; border: 1px solid #d9dce2; background: #fff; }
.styles h3 { margin-top: 21px; font-size: 14px; line-height: 20px; }
.style-list { flex: 1; min-height: 0; margin-top: 6px; padding: 2px 12px 0 2px; list-style: none; border: 1px solid var(--line); border-radius: 2px; background: #fff; color: #000; }
.style-list li { height: 34px; padding: 0 6px 0 5px; display: flex; align-items: center; justify-content: space-between; white-space: pre; font-weight: bold; }
.style-list .h1 { font-size: 21px; font-family: "DejaVu Sans Mono", "Noto Sans CJK SC", monospace; }
.style-list .h2 { font-size: 20px; font-family: "Liberation Mono", "Noto Sans CJK SC", monospace; }
.style-list .h3 { font-size: 20px; font-family: "DejaVu Sans Mono", "Noto Sans CJK SC", monospace; }
.style-list .h4 { font-size: 18px; font-family: "Liberation Mono", "Noto Sans CJK SC", monospace; }
.style-list .char { font-size: 13px; font-weight: normal; }
.style-list .char u { font-size: 11px; }
.style-list .body { font-size: 16px; font-weight: normal; }
.style-list .selected { border: 1px solid var(--blue); padding: 0 5px 0 3px; }
.mark { width: 10px; height: 9px; margin-bottom: 9px; stroke: #000; }
.show { margin-top: 7px; display: flex; align-items: center; }
.show label { width: 33px; color: var(--ink); }
.show .pick { flex: 1; }
.foot { margin-top: 11px; padding-right: 5px; display: flex; justify-content: space-between; }
.foot label, .foot a { display: flex; align-items: center; gap: 5px; color: var(--ink); }
.foot a { gap: 2px; color: #3f7df5; }
.foot input { appearance: none; width: 13px; height: 13px; border: 1px solid #333; background: #fff; display: grid; place-items: center; }
.foot input::before { content: ""; width: 8px; height: 4px; margin-bottom: 2px; border: solid #333; border-width: 0 0 1px 1px; transform: rotate(-45deg); }

.rail { flex: none; width: 43px; padding: 12px 2px 15px 0; display: flex; flex-direction: column; align-items: center; gap: 4px; }
.rail button { width: 32px; height: 32px; display: grid; place-items: center; border-radius: 2px; }
.rail .current { background: #d9dde5; }
.grip { width: 20px; height: 4px; margin-bottom: 8px; border: solid #ccd0d8; border-width: 1px 0; }
.rail-more { margin-top: auto; width: 38px; padding-top: 22px; border-top: 1px solid var(--line); display: grid; justify-items: center; }

/* status bar */
.status { flex: none; height: 29px; padding: 0 16px 2px 10px; display: flex; align-items: center; background: var(--surface); border-top: 1px solid var(--line); }
.status > span, .status > button { margin-right: 6px; display: flex; align-items: center; white-space: pre; }
.status > .line { padding-left: 9px; border-left: 1px solid var(--line); }
.status > .far { margin-left: 11px; }
.status > .column { margin: 0 12px 0 8px; }
.status > button.line { margin-right: 5px; padding-left: 4px; gap: 3px; }
.status > button .caret { margin-left: 1px; }
.status > .last { padding-right: 6px; border-right: 1px solid var(--line); }
.views { margin-left: auto; display: flex; align-items: center; }
.status .vline { height: 14px; margin: 0 12px; background: var(--line); }
.modes { display: flex; gap: 3px; margin-right: 1px; }
.modes button { width: 23px; height: 24px; display: grid; place-items: center; }
.modes .current { background: #d9dfe6; border-radius: 2px; }
.zoom { display: flex; align-items: center; margin: 0 12px 0 6px; font: 13px/16px "Noto Sans CJK SC", sans-serif; color: #3d4a63; }
.zoom .caret { margin-left: 4px; }
.minus, .plus { width: 10px; height: 10px; background: linear-gradient(var(--ink), var(--ink)) center / 10px 2px no-repeat; }
.plus { background: linear-gradient(var(--ink), var(--ink)) center / 10px 2px no-repeat, linear-gradient(var(--ink), var(--ink)) center / 2px 10px no-repeat; margin-right: 12px; }
.status input { appearance: none; width: 138px; height: 14px; margin: 0 10px 0 12px; background: linear-gradient(90deg, var(--ink) 54%, #c9ced8 54%) center / 100% 1px no-repeat; }
.status input::-webkit-slider-thumb { appearance: none; width: 12px; height: 12px; border: 1px solid var(--ink); border-radius: 50%; background: #f0f0f0; }

/* page setup dialog */
.dialog { position: absolute; left: 734px; top: 208px; z-index: 2; width: 424px; height: 601px; border: 1px solid #767676; display: flex; flex-direction: column; background: #f0f0f0; color: #000; }
.dialog > header { height: 25px; padding: 0 9px 2px 3px; display: flex; align-items: center; gap: 5px; background: #fff; }
.dialog > header span { flex: 1; }
.dialog > header svg { stroke: #000; }
.dialog > header .plain { stroke: none; }
.dialog-tabs { height: 24px; margin: 8px 8px -1px; display: flex; align-items: flex-end; }
.dialog-tabs button { height: 24px; padding: 0 11px; border: 1px solid #d9d9d9; border-left-width: 0; background: #f0f0f0; }
.dialog-tabs button:first-child { border-left-width: 1px; }
.dialog-tabs .current { height: 25px; padding: 0 12px; background: #fff; border-bottom-color: #fff; }
.panel { flex: 1; margin: 0 9px 0 8px; padding: 7px 7px 13px 6px; display: flex; flex-direction: column; border: 1px solid #dcdcdc; background: #fff; }
fieldset { min-width: 0; border: 0; border-top: 1px solid #a0a0a0; padding: 6px 0 8px 8px; }
legend { margin-left: -8px; padding: 0 3px 0 0; height: 16px; }
.row { height: 23px; display: flex; align-items: center; }
.row label { display: flex; align-items: center; gap: 6px; }
.direction span { width: 80px; }
.direction label { width: 117px; }
.pair label { width: 194px; white-space: nowrap; }
.pair label + label { margin-left: 2px; }
input[type="radio"] { appearance: none; flex: none; width: 13px; height: 13px; border: 1px solid #333; border-radius: 50%; background: #fff; }
input[type="radio"]:checked { background: radial-gradient(#333 3px, #fff 4px); }
fieldset.number { padding: 8px 0 10px 8px; }
.number .row { gap: 6px; }
.stepper { width: 65px; height: 23px; padding: 1px; border: 1px solid #7a7a7a; display: flex; background: #fff; }
.stepper input { flex: 1; min-width: 0; border: 0; padding: 0 0 0 2px; background: none; }
.steps { width: 14px; display: grid; grid-template-rows: 1fr 1fr; }
.steps i { display: grid; place-items: center; border: 1px solid #adadad; background: #f0f0f0; }
.steps i::before { content: ""; width: 5px; height: 3px; background: #000; clip-path: polygon(50% 0, 100% 100%, 0 100%); }
.steps i + i::before { clip-path: polygon(0 0, 100% 0, 50% 100%); }
.stepper.off { border-color: #ccc; background: #f0f0f0; color: #838383; }
.stepper.off i { border-color: #d4d4d4; }
.stepper.off i::before { background: #777; }
fieldset.preview { margin-top: auto; padding-bottom: 0; }
.preview-body { display: flex; justify-content: space-between; margin-top: 1px; }
.apply label { display: block; margin-bottom: 2px; }
.apply .pick { width: 145px; }
.apply select { height: 23px; border-color: #adadad; background: #e1e1e1; padding: 0 3px; }
.apply .pick::after { width: 8px; margin-right: 5px; background: #000; }
.apply-buttons { margin-top: 31px; display: flex; gap: 8px; }
.apply-buttons button { width: 85px; height: 30px; }
.apply-buttons button, .dialog-foot button { border: 1px solid #adadad; background: #e1e1e1; }
.sheet { margin-right: 16px; }
.dialog-foot { padding: 8px 8px 9px; display: flex; gap: 8px; }
.dialog-foot button { width: 77px; height: 30px; }
.dialog-foot .primary { border: 2px solid #0078d7; }
.dialog-foot a { flex: 1; margin-left: 3px; display: flex; align-items: center; gap: 6px; }
.callout { position: absolute; border: 3px solid #f00a0a; box-shadow: 1px 2px 4px #0009, inset 1px 2px 4px #0009; }
.tab-callout { left: 153px; top: 11px; width: 89px; height: 64px; }
.button-callout { left: 0; top: 496px; width: 122px; height: 52px; }

.meter { position: absolute; right: 0; top: 854px; width: 10px; height: 59px; z-index: 2; }
.watermark { position: absolute; right: 10px; bottom: 10px; z-index: 3; display: flex; pointer-events: none; opacity: .85; }
.watermark div { display: flex; flex-direction: column; }
.watermark strong { font-size: 21px; line-height: 22px; color: #4f94d8; }
.watermark span { font: 17px/19px "Open Sans", sans-serif; color: #62bd74; }
```
